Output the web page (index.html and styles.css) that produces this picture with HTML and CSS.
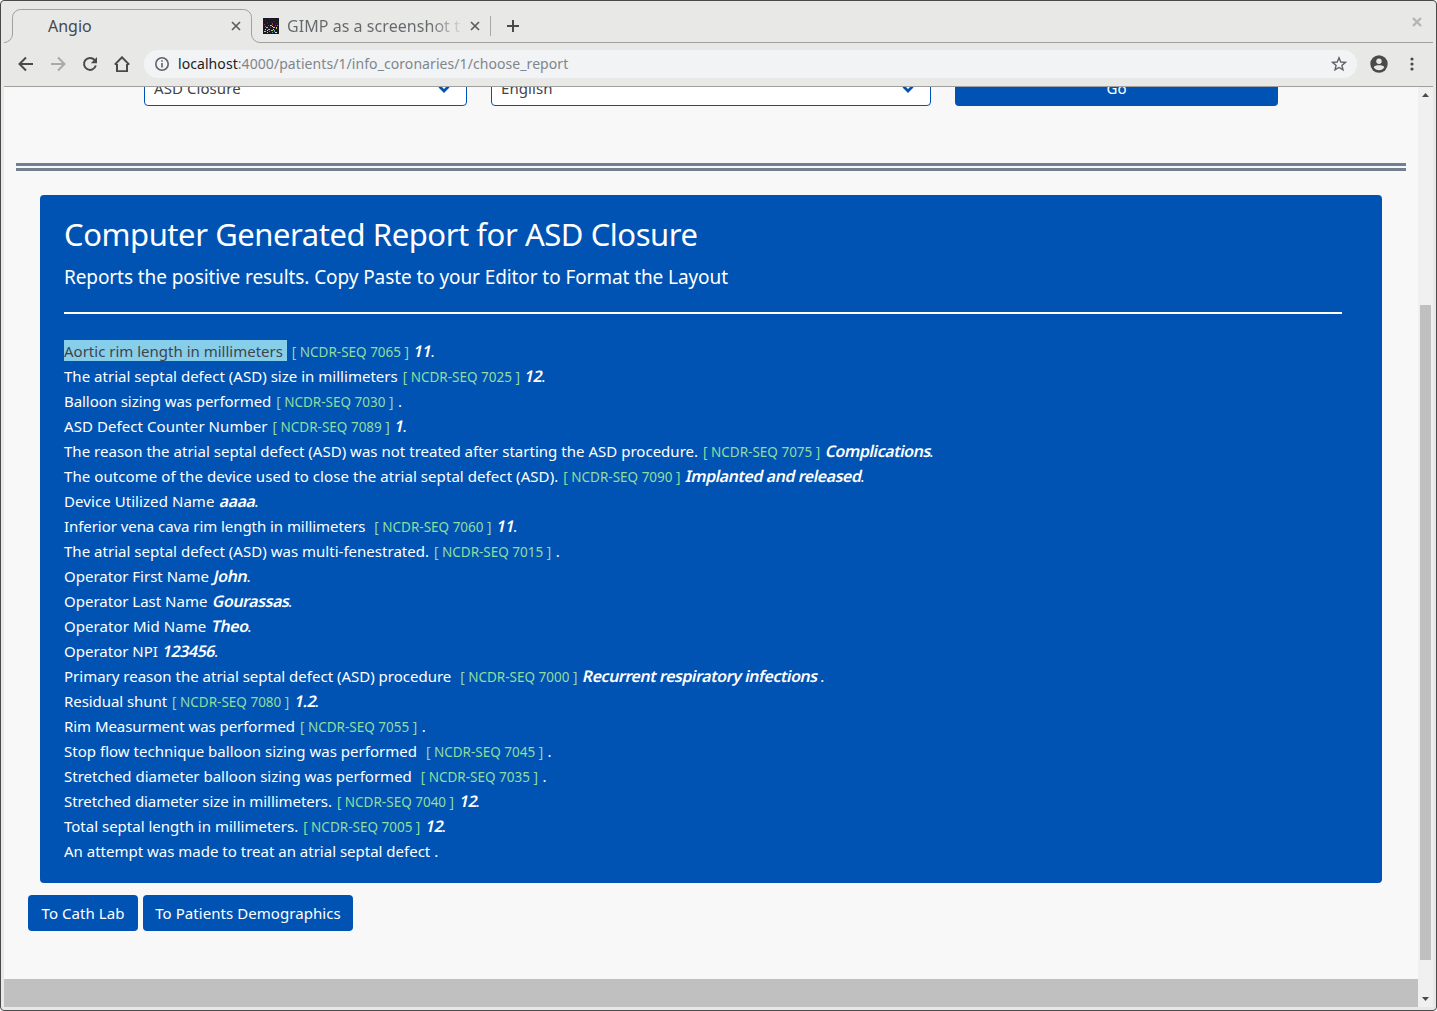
FILE: index.html
```html
<!DOCTYPE html>
<html lang="en">
<head>
<meta charset="utf-8">
<title>Angio</title>
<link rel="stylesheet" href="styles.css">
</head>
<body>
<div class="window">
  <header class="chrome">
    <div class="tabs">
      <svg class="outline" viewBox="0 0 1429 35"><path d="M0 34.500A8.500 8.500 0 0 0 8.500 26V9.500A8 8 0 0 1 16.500 1.500H239.500A8 8 0 0 1 247.500 9.500V26A8.500 8.500 0 0 0 256 34.500H1429"/></svg>
      <div class="tab active"><span>Angio</span><svg class="x" viewBox="0 0 10 10"><path d="M1 1l8 8M9 1L1 9"/></svg></div>
      <div class="tabs-rest">
        <svg class="favicon" viewBox="0 0 16 16" shape-rendering="crispEdges"><path fill="#1c1722" d="M0 0h16v16H0z"/><path fill="#263060" d="M2 2h1v1H2zM6 1h1v1H6zM10 3h2v1h-2zM13 5h1v1h-1zM4 4h1v2H4zM8 4h1v1H8z"/><path fill="#b33232" d="M1 6h1v1H1zM9 5h1v2H9zM12 7h1v1h-1zM5 7h1v1H5zM7 9h1v1H7z"/><path fill="#d5c84a" d="M3 9h2v1H3zM7 7h2v1H7zM10 9h2v1h-2zM13 9h1v2h-1zM5 11h2v1H5zM1 13h2v1H1zM8 12h2v1H8zM4 14h1v1H4z"/><path fill="#48a0c8" d="M2 8h1v1H2zM6 13h1v1H6zM11 12h1v2h-1zM14 7h1v1h-1zM9 14h1v1H9z"/><path fill="#ddd" d="M4 12h1v1H4zM10 11h1v1h-1zM12 14h2v1h-2zM2 11h1v1H2zM9 8h1v1H9z"/></svg>
        <span class="tab-title">GIMP as a screenshot t</span>
        <svg class="x" viewBox="0 0 10 10"><path d="M1 1l8 8M9 1L1 9"/></svg>
        <i class="sep"></i>
        <svg class="plus" viewBox="0 0 12 12"><path d="M6 0v12M0 6h12"/></svg>
        <svg class="close" viewBox="0 0 10 10"><path d="M1 1l8 8M9 1L1 9"/></svg>
      </div>
    </div>
    <div class="toolbar">
      <svg class="nav" viewBox="0 0 16 16"><path d="M15 8H2M8 1.500L1.500 8 8 14.500"/></svg>
      <svg class="nav off" viewBox="0 0 16 16"><path d="M1 8h13M8 1.500L14.500 8 8 14.500"/></svg>
      <svg class="nav" viewBox="0 0 16 16"><path d="M13.800 9.500A6 6 0 1 1 12.600 4"/><path class="fill" d="M15 1v6.300H8.800z"/></svg>
      <svg class="nav" viewBox="0 0 16 16"><path d="M.8 8.600L8 1.300l7.200 7.300M3 8v7.200h10V8"/></svg>
      <div class="address">
        <svg class="info" viewBox="0 0 14 14"><circle cx="7" cy="7" r="6.200"/><path d="M7 6v4.500M7 3.300v1.500"/></svg>
        <span class="url"><b>localhost</b>:4000/patients/1/info_coronaries/1/choose_report</span>
        <svg class="star" viewBox="0 0 16 16"><path d="M8 1.800l1.800 4.200 4.600.4-3.500 3 1.100 4.500L8 11.500l-4 2.400 1.100-4.500-3.500-3 4.600-.4z"/></svg>
      </div>
      <svg class="user" viewBox="0 0 18 18"><circle cx="9" cy="9" r="8.700" fill="#4a4a4a"/><circle cx="9" cy="6.200" r="2.700" fill="#e8e8e6"/><path d="M3.700 12.300c1-2.600 9.600-2.600 10.600 0a6.300 6.300 0 0 1-10.600 0z" fill="#e8e8e6"/></svg>
      <svg class="menu" viewBox="0 0 4 14"><circle cx="2" cy="2" r="1.600"/><circle cx="2" cy="7" r="1.600"/><circle cx="2" cy="12" r="1.600"/></svg>
    </div>
  </header>
  <div class="view">
    <main class="page">
      <div class="filters">
        <div class="select s1"><span>ASD Closure</span><svg viewBox="0 0 12 8"><path d="M1.500 1.500L6 6l4.500-4.500"/></svg></div>
        <div class="select s2"><span>English</span><svg viewBox="0 0 12 8"><path d="M1.500 1.500L6 6l4.500-4.500"/></svg></div>
        <div class="go">Go</div>
      </div>
      <div class="rule"></div>
      <section class="card">
        <h1>Computer Generated Report for ASD Closure</h1>
        <p class="lead">Reports the positive results. Copy Paste to your Editor to Format the Layout</p>
        <hr>
        <div class="row"><span class="label sel">Aortic rim length in millimeters&nbsp;</span><span class="code">[ NCDR-SEQ 7065 ]</span><em>11</em>.</div>
        <div class="row"><span class="label slight">The atrial septal defect (ASD) size in millimeters</span><span class="code">[ NCDR-SEQ 7025 ]</span><em>12</em>.</div>
        <div class="row"><span class="label tight">Balloon sizing was performed</span><span class="code">[ NCDR-SEQ 7030 ]</span>.</div>
        <div class="row"><span class="label loose">ASD Defect Counter Number</span><span class="code">[ NCDR-SEQ 7089 ]</span><em>1</em>.</div>
        <div class="row"><span class="label slight">The reason the atrial septal defect (ASD) was not treated after starting the ASD procedure.</span><span class="code">[ NCDR-SEQ 7075 ]</span><em>Complications</em>.</div>
        <div class="row"><span class="label loose">The outcome of the device used to close the atrial septal defect (ASD).</span><span class="code">[ NCDR-SEQ 7090 ]</span><em>Implanted and released</em>.</div>
        <div class="row"><span class="label loose">Device Utilized Name</span><em>aaaa</em>.</div>
        <div class="row"><span class="label tight">Inferior vena cava rim length in millimeters&nbsp;</span><span class="code">[ NCDR-SEQ 7060 ]</span><em>11</em>.</div>
        <div class="row"><span class="label slight">The atrial septal defect (ASD) was multi-fenestrated.</span><span class="code">[ NCDR-SEQ 7015 ]</span>.</div>
        <div class="row"><span class="label">Operator First Name</span><em>John</em>.</div>
        <div class="row"><span class="label">Operator Last Name</span><em>Gourassas</em>.</div>
        <div class="row"><span class="label loose">Operator Mid Name</span><em>Theo</em>.</div>
        <div class="row"><span class="label">Operator NPI</span><em>123456</em>.</div>
        <div class="row"><span class="label">Primary reason the atrial septal defect (ASD) procedure&nbsp;</span><span class="code">[ NCDR-SEQ 7000 ]</span><em>Recurrent respiratory infections</em>&nbsp;.</div>
        <div class="row"><span class="label tight">Residual shunt</span><span class="code">[ NCDR-SEQ 7080 ]</span><em>1.2</em>.</div>
        <div class="row"><span class="label tight">Rim Measurment was performed</span><span class="code">[ NCDR-SEQ 7055 ]</span>.</div>
        <div class="row"><span class="label slight">Stop flow technique balloon sizing was performed&nbsp;</span><span class="code">[ NCDR-SEQ 7045 ]</span>.</div>
        <div class="row"><span class="label">Stretched diameter balloon sizing was performed&nbsp;</span><span class="code">[ NCDR-SEQ 7035 ]</span>.</div>
        <div class="row"><span class="label tight">Stretched diameter size in millimeters.</span><span class="code">[ NCDR-SEQ 7040 ]</span><em>12</em>.</div>
        <div class="row"><span class="label">Total septal length in millimeters.</span><span class="code">[ NCDR-SEQ 7005 ]</span><em>12</em>.</div>
        <div class="row"><span class="label">An attempt was made to treat an atrial septal defect&nbsp;</span>.</div>
      </section>
      <div class="actions"><a class="btn b1">To Cath Lab</a><a class="btn b2">To Patients Demographics</a></div>
      <footer class="foot"></footer>
    </main>
    <aside class="scroll">
      <svg viewBox="0 0 7 4"><path d="M0 4l3.500-4L7 4z"/></svg>
      <div class="thumb"></div>
      <svg viewBox="0 0 7 4"><path d="M0 0l3.500 4L7 0z"/></svg>
    </aside>
  </div>
</div>
</body>
</html>
```
FILE: styles.css
```css
* { box-sizing: border-box; }
body { margin: 0; background: #fff; font-family: "Noto Sans", sans-serif; }
svg { display: block; flex: none; }
.window { width: 1437px; height: 1011px; border: 1px solid #4a4a4a; border-radius: 4px; background: #e8e8e6; padding: 0 3px 3px; display: flex; flex-direction: column; overflow: hidden; }
.chrome { height: 86px; border-bottom: 1px solid #a0a09f; flex: none; }
.tabs { height: 42px; padding-top: 8px; display: flex; position: relative; }
.outline { position: absolute; left: 0; top: 7px; width: 1429px; height: 35px; fill: none; stroke: #a0a09f; stroke-width: 1; }
.tab { display: flex; align-items: center; font-size: 16px; color: #45484a; }
.active { width: 247px; height: 34px; padding: 0 10px 0 44px; justify-content: space-between; flex: none; }
.x { width: 10px; height: 10px; fill: none; stroke: #5a5d60; stroke-width: 1.7; }
.tabs-rest { flex: 1; height: 34px; display: flex; align-items: center; padding: 0 11px 0 12px; }
.favicon { width: 16px; height: 16px; }
.tab-title { font-size: 16px; letter-spacing: .05px; width: 174px; margin: 0 9px 0 8px; white-space: nowrap; overflow: hidden; color: transparent; background: linear-gradient(90deg, #65686b 82%, #d8d8d8 100%); background-clip: text; }
.sep { width: 1px; height: 20px; background: #a9a9a8; margin: 0 16px 0 10px; }
.plus { width: 12px; height: 12px; stroke: #4a4a4a; stroke-width: 2; }
.close { width: 10px; height: 10px; stroke: #b5b5b4; stroke-width: 2.4; margin: -8px 0 0 auto; }
.toolbar { height: 43px; display: flex; align-items: center; padding: 0 0 2px 14px; }
.nav { width: 16px; height: 16px; margin-right: 16px; fill: none; stroke: #4a4a4a; stroke-width: 2; }
.nav .fill { fill: #4a4a4a; stroke: none; }
.off { stroke: #a9a9a8; }
.address { width: 1213px; height: 28px; border-radius: 14px; background: #f1f3f5; margin-left: -2px; display: flex; align-items: center; padding: 0 10px 0 11px; }
.info { width: 14px; height: 14px; fill: none; stroke: #5f6368; stroke-width: 1.6; }
.url { font-size: 14px; letter-spacing: .07px; color: #80868b; margin-left: 9px; margin-top: -1px; flex: 1; }
.url b { font-weight: 400; color: #202124; }
.star { width: 16px; height: 16px; fill: none; stroke: #5f6368; stroke-width: 1.4; }
.user { width: 18px; height: 18px; margin-left: 13px; }
.menu { width: 4px; height: 14px; margin-left: 21.5px; fill: #4a4a4a; }
.view { flex: 1; display: flex; overflow: hidden; min-height: 0; }
.page { flex: 1; background: #f8f8f8; display: flex; flex-direction: column; font-size: 15px; }
.filters { height: 38px; margin: -19px 0 0 140px; display: flex; flex: none; }
.select { height: 38px; border: 1px solid #0053b3; border-radius: 4px; background: #fff; display: flex; align-items: center; justify-content: space-between; padding: 3px 16px 0 9px; color: #404448; }
.select span { margin-top: -2px; letter-spacing: .07px; }
.select svg { width: 12px; height: 8px; fill: none; stroke: #0053b3; stroke-width: 2.8; }
.s1 { width: 323px; }
.s2 { width: 440px; margin: 0 24px; }
.go { width: 323px; height: 38px; background: #0053b3; border-radius: 4px; color: #fff; text-align: center; line-height: 40px; }
.rule { height: 8px; margin: 57px 12px 24px; border: solid #708090; border-width: 3px 0; flex: none; }
.card { height: 688px; margin: 0 36px; border-radius: 4px; background: #0053b3; color: #fff; padding: 20px 40px 0 24px; flex: none; }
h1 { margin: 0; font-size: 31px; font-weight: 400; line-height: 38px; white-space: nowrap; letter-spacing: -.44px; }
.lead { margin: 8px 0 0; font-size: 19px; line-height: 32px; white-space: nowrap; letter-spacing: -.09px; }
hr { height: 2px; border: 0; margin: 19px 0 25px; background: #fff; }
.row { height: 25px; line-height: 25px; display: flex; white-space: nowrap; }
.sel { background: #87ceeb; color: #404448; height: 21px; line-height: 23px; margin-top: 1px; }
.tight { letter-spacing: -.06px; }
.slight { letter-spacing: .02px; }
.loose { letter-spacing: .07px; }
.code { font-size: 13.5px; color: #90dea0; margin: 1px 4.5px 0 5px; }
em { font-style: normal; font-weight: 600; letter-spacing: -.45px; font-size: 16px; line-height: 24px; margin: 0 -1.5px 0 1px; transform: skewX(-12deg); }
.label + em { margin-left: 5.5px; }
.actions { display: flex; gap: 5px; margin: 12px 0 48px 24px; }
.btn { height: 36px; border-radius: 4px; background: #0053b3; color: #fff; text-align: center; line-height: 37px; white-space: nowrap; letter-spacing: .06px; }
.b1 { width: 110px; }
.b2 { width: 210px; }
.foot { flex: 1; background: #c0c0c0; }
.scroll { width: 15px; background: #f0f0f0; display: flex; flex-direction: column; align-items: center; padding: 6px 1px 6px 0; }
.scroll svg { width: 7px; height: 4px; fill: #4a4a4a; }
.thumb { width: 11px; height: 655px; background: #c0c0c0; margin: 208px 0 auto; }
```
